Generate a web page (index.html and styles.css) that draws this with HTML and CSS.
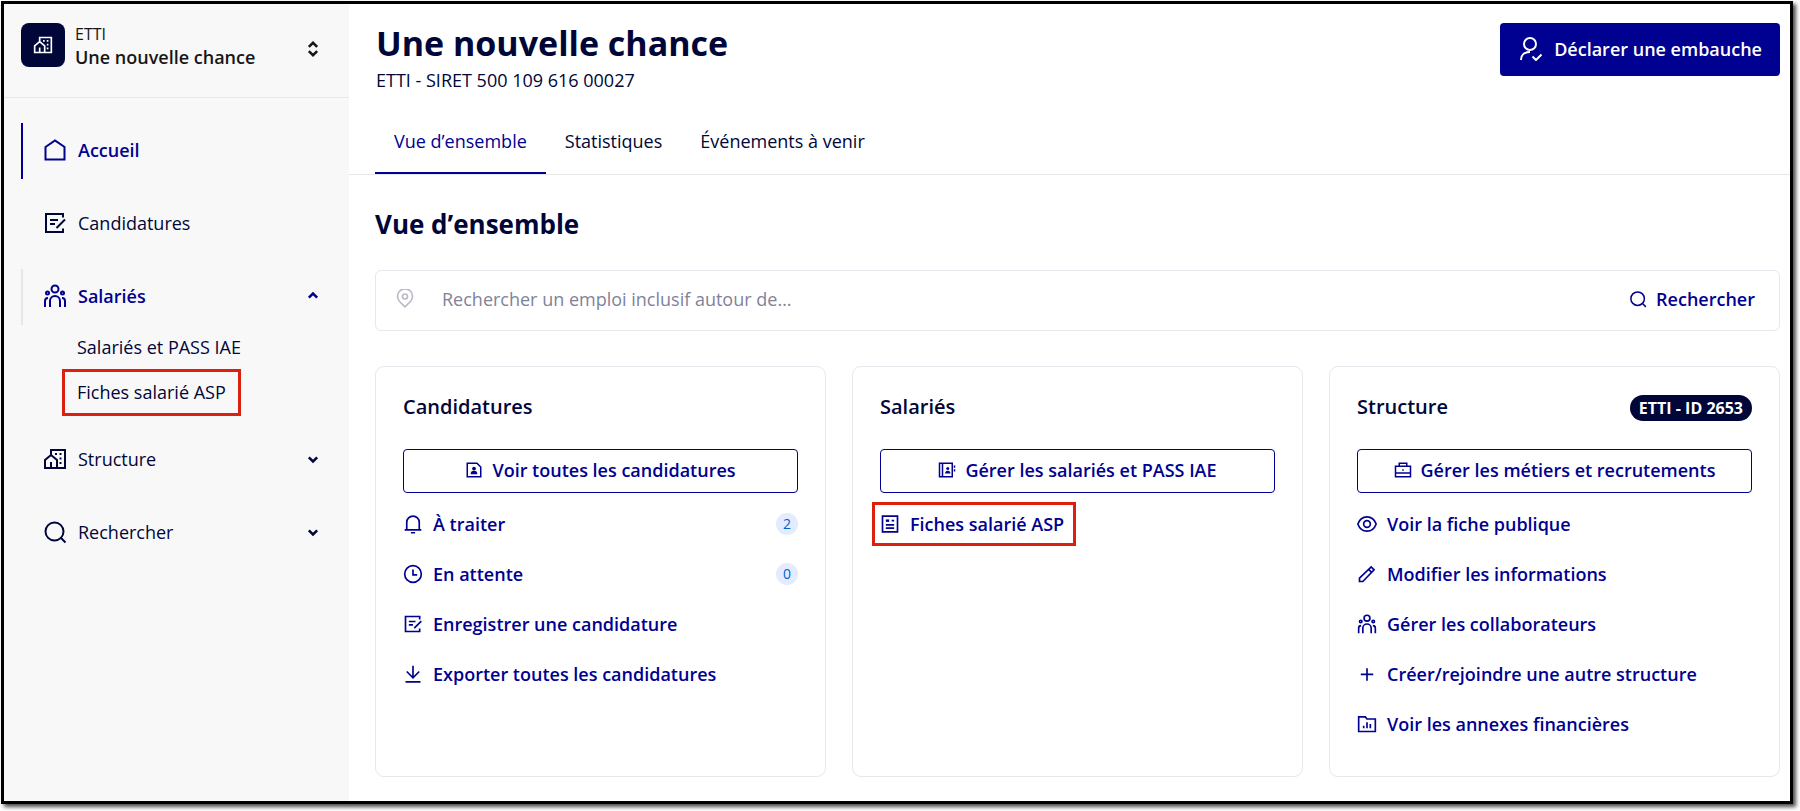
FILE: index.html
```html
<!DOCTYPE html>
<html lang="fr">
  <head>
    <meta charset="UTF-8" />
    <meta name="viewport" content="width=device-width, initial-scale=1.0" />
    <title>Une nouvelle chance - Vue d’ensemble</title>
    <link rel="stylesheet" href="styles.css">
  </head>
  <body>
    <!-- icon set -->
    <svg class="sprite" aria-hidden="true">
      <symbol id="i-home" viewBox="0 0 24 24">
        <path d="M2.500 9 12 2.500 21.500 9v12.500h-19z" />
      </symbol>
      <symbol id="i-edit" viewBox="0 0 24 24">
        <path d="M20 6.500V3H3v18h17v-3.500M7 9h8M7 13h5M22 8.500l-8.500 8.500" />
      </symbol>
      <symbol id="i-team" viewBox="0 0 24 24">
        <circle cx="12" cy="5" r="3.500" />
        <circle cx="4.500" cy="9" r="1.500" />
        <circle cx="19.500" cy="9" r="1.500" />
        <path d="M7 23v-6a5 5 0 0 1 10 0v6M2 23v-6a3 3 0 0 1 3-3M22 23v-6a3 3 0 0 0-3-3" />
      </symbol>
      <symbol id="i-building" viewBox="0 0 24 24">
        <path d="M8 8V3h14v18H2v-8l6-5 6 5v8M8 21v-6" />
        <path d="M12 7h2M16.500 7h2M16.500 11.500h2M16.500 16h2" />
      </symbol>
      <symbol id="i-search" viewBox="0 0 24 24">
        <circle cx="11.500" cy="11.500" r="9" />
        <path d="m18 18 4.500 4.500" />
      </symbol>
      <symbol id="i-down" viewBox="0 0 24 24">
        <path d="m7 10 5 5 5-5" />
      </symbol>
      <symbol id="i-up" viewBox="0 0 24 24">
        <path d="m7 14 5-5 5 5" />
      </symbol>
      <symbol id="i-updown" viewBox="0 0 24 24">
        <path d="m7 9.500 5-5 5 5M7 14.500l5 5 5-5" />
      </symbol>
      <symbol id="i-user-check" viewBox="0 0 24 24">
        <circle cx="12" cy="7" r="6" />
        <path d="M3 23c0-5 3.500-8 9-8M14.500 19.500l3.500 3.500 5.500-5.500" />
      </symbol>
      <symbol id="i-pin" viewBox="0 0 24 24">
        <path d="M12 21.500 5.500 15a9 9 0 1 1 13 0z" />
        <circle cx="12" cy="9" r="3" />
      </symbol>
      <symbol id="i-file-user" viewBox="0 0 24 24">
        <path d="M3 3h13l5 5v13H3z" />
        <circle class="fill" cx="12" cy="10" r="2.500" />
        <path class="fill" d="M7.500 17.500a4.500 4.500 0 0 1 9 0z" />
      </symbol>
      <symbol id="i-contacts" viewBox="0 0 24 24">
        <path d="M2 3h17v18H2zM6 3v18M22 6v3M22 11v3" />
        <circle class="fill" cx="13" cy="10" r="2" />
        <path class="fill" d="M9.500 16.500a3.500 3.500 0 0 1 7 0z" />
      </symbol>
      <symbol id="i-briefcase" viewBox="0 0 24 24">
        <path d="M2 7h20v14H2zM7 7V3h10v4M2 16h20M11 12h2" />
      </symbol>
      <symbol id="i-bell" viewBox="0 0 24 24">
        <path d="M4.500 19v-9a7.500 7.500 0 0 1 15 0v9M2 19h20M9.500 22.500h5" />
      </symbol>
      <symbol id="i-clock" viewBox="0 0 24 24">
        <circle cx="12" cy="12" r="10" />
        <path d="M12 6.500V13h5" />
      </symbol>
      <symbol id="i-download" viewBox="0 0 24 24">
        <path d="M12 2v14M4.500 9l7.500 7.500L19.500 9M3 21.500h18" />
      </symbol>
      <symbol id="i-article" viewBox="0 0 24 24">
        <path d="M3 2.500h18v19H3zM7 13h10M7 17h10M14 8h3" />
        <path class="fill" d="M7 6.500h4v3H7z" />
      </symbol>
      <symbol id="i-eye" viewBox="0 0 24 24">
        <path d="M1 12c2-5.500 6-8.500 11-8.500s9 3 11 8.500c-2 5.500-6 8.500-11 8.500S3 17.500 1 12z" />
        <circle cx="12" cy="12" r="4" />
      </symbol>
      <symbol id="i-pencil" viewBox="0 0 24 24">
        <path d="M3 21v-4L17 3.500l3.500 3.500L7 21zM14 6.500l3.500 3.500" />
      </symbol>
      <symbol id="i-plus" viewBox="0 0 24 24">
        <path d="M12 5v15M4.500 12.500h15" />
      </symbol>
      <symbol id="i-folder-chart" viewBox="0 0 24 24">
        <path d="M2 3.500h8l2 2.500h10v15H2zM8 14v3M12 10v7M16 12v5" />
      </symbol>
    </svg>

    <div class="frame">
      <aside class="sidebar">
        <button class="org" type="button">
          <span class="org-logo">
            <svg class="icon icon-md"><use href="#i-building" /></svg>
          </span>
          <span class="org-text">
            <span class="org-type">ETTI</span>
            <strong class="org-name">Une nouvelle chance</strong>
          </span>
          <svg class="icon icon-chevron"><use href="#i-updown" /></svg>
        </button>

        <nav class="nav">
          <a class="nav-item active" href="#">
            <svg class="icon icon-lg"><use href="#i-home" /></svg>Accueil
          </a>
          <a class="nav-item" href="#">
            <svg class="icon icon-lg"><use href="#i-edit" /></svg>Candidatures
          </a>
          <div class="nav-group">
            <button class="nav-item open" type="button" aria-expanded="true">
              <svg class="icon icon-lg"><use href="#i-team" /></svg>Salariés
              <svg class="icon icon-chevron"><use href="#i-up" /></svg>
            </button>
            <ul class="subnav">
              <li><a href="#">Salariés et PASS IAE</a></li>
              <li><a class="marked" href="#">Fiches salarié ASP</a></li>
            </ul>
          </div>
          <button class="nav-item" type="button" aria-expanded="false">
            <svg class="icon icon-lg"><use href="#i-building" /></svg>Structure
            <svg class="icon icon-chevron"><use href="#i-down" /></svg>
          </button>
          <button class="nav-item" type="button" aria-expanded="false">
            <svg class="icon icon-lg"><use href="#i-search" /></svg>Rechercher
            <svg class="icon icon-chevron"><use href="#i-down" /></svg>
          </button>
        </nav>
      </aside>

      <main class="main">
        <header class="page-header">
          <div>
            <h1>Une nouvelle chance</h1>
            <p class="siret">ETTI - SIRET 500 109 616 00027</p>
          </div>
          <button class="btn-primary" type="button">
            <svg class="icon icon-lg"><use href="#i-user-check" /></svg>Déclarer une embauche
          </button>
        </header>

        <nav class="tabs">
          <a class="tab active" href="#">Vue d’ensemble</a>
          <a class="tab" href="#">Statistiques</a>
          <a class="tab" href="#">Événements à venir</a>
        </nav>

        <section class="content">
          <h2>Vue d’ensemble</h2>

          <form class="search">
            <label for="city"><svg class="icon icon-md"><use href="#i-pin" /></svg></label>
            <input id="city" type="text" placeholder="Rechercher un emploi inclusif autour de…" aria-label="Rechercher un emploi inclusif autour de…" />
            <button type="button">
              <svg class="icon icon-sm"><use href="#i-search" /></svg>Rechercher
            </button>
          </form>

          <div class="cards">
            <article class="card">
              <div class="card-head">
                <h3>Candidatures</h3>
              </div>
              <a class="btn-outline" href="#">
                <svg class="icon icon-sm"><use href="#i-file-user" /></svg>Voir toutes les candidatures
              </a>
              <ul class="links">
                <li>
                  <a href="#"><svg class="icon icon-md"><use href="#i-bell" /></svg>À traiter</a>
                  <span class="count">2</span>
                </li>
                <li>
                  <a href="#"><svg class="icon icon-md"><use href="#i-clock" /></svg>En attente</a>
                  <span class="count">0</span>
                </li>
                <li>
                  <a href="#"><svg class="icon icon-md"><use href="#i-edit" /></svg>Enregistrer une candidature</a>
                </li>
                <li>
                  <a href="#"><svg class="icon icon-md"><use href="#i-download" /></svg>Exporter toutes les candidatures</a>
                </li>
              </ul>
            </article>

            <article class="card">
              <div class="card-head">
                <h3>Salariés</h3>
              </div>
              <a class="btn-outline" href="#">
                <svg class="icon icon-sm"><use href="#i-contacts" /></svg>Gérer les salariés et PASS IAE
              </a>
              <ul class="links">
                <li>
                  <a class="marked" href="#"><svg class="icon icon-md"><use href="#i-article" /></svg>Fiches salarié ASP</a>
                </li>
              </ul>
            </article>

            <article class="card">
              <div class="card-head">
                <h3>Structure</h3>
                <span class="badge">ETTI - ID 2653</span>
              </div>
              <a class="btn-outline" href="#">
                <svg class="icon icon-sm"><use href="#i-briefcase" /></svg>Gérer les métiers et recrutements
              </a>
              <ul class="links">
                <li>
                  <a href="#"><svg class="icon icon-md"><use href="#i-eye" /></svg>Voir la fiche publique</a>
                </li>
                <li>
                  <a href="#"><svg class="icon icon-md"><use href="#i-pencil" /></svg>Modifier les informations</a>
                </li>
                <li>
                  <a href="#"><svg class="icon icon-md"><use href="#i-team" /></svg>Gérer les collaborateurs</a>
                </li>
                <li>
                  <a href="#"><svg class="icon icon-md"><use href="#i-plus" /></svg>Créer/rejoindre une autre structure</a>
                </li>
                <li>
                  <a href="#"><svg class="icon icon-md"><use href="#i-folder-chart" /></svg>Voir les annexes financières</a>
                </li>
              </ul>
            </article>
          </div>
        </section>
      </main>
    </div>
  </body>
</html>
```
FILE: styles.css
```css
* {
  box-sizing: border-box;
}
body {
  display: flex;
  min-height: 100vh;
  margin: 0;
  padding: 1px 7px 7px 1px;
  background: #fff;
  color: #000638;
  font-family: "Open Sans", "Noto Sans", sans-serif;
  font-size: 18px;
  line-height: 26px;
}
h1,
h2,
h3,
p,
ul {
  margin: 0;
  padding: 0;
  font-weight: 600;
}
ul {
  list-style: none;
}
a {
  color: inherit;
  text-decoration: none;
}
button,
input {
  border: none;
  background: none;
  color: inherit;
  font: inherit;
}
button {
  cursor: pointer;
  text-align: left;
}
.sprite {
  position: absolute;
  width: 0;
  height: 0;
}

/* icons */
.icon {
  flex: none;
  fill: none;
  stroke: currentColor;
  stroke-width: 2;
}
.icon .fill,
symbol .fill {
  fill: currentColor;
  stroke: none;
}
.icon-sm {
  width: 18px;
  height: 18px;
}
.icon-md {
  width: 20px;
  height: 20px;
}
.icon-lg {
  width: 24px;
  height: 24px;
}
.icon-chevron {
  width: 20px;
  height: 20px;
  margin-left: auto;
  stroke-width: 3;
}

.frame {
  display: flex;
  flex: 1;
  border: 3px solid #000;
  background: #fff;
  box-shadow: 3px 3px 4px rgba(0, 0, 0, 0.7);
}

/* sidebar */
.sidebar {
  flex: none;
  width: 345px;
  background: #f8f8f8;
}
.org {
  display: flex;
  gap: 10px;
  width: 100%;
  height: 94px;
  padding: 19px 26px 0 17px;
  border-bottom: 1px solid #e7e7e7;
  color: #161616;
  align-items: flex-start;
}
.org-logo {
  display: flex;
  align-items: center;
  justify-content: center;
  width: 44px;
  height: 44px;
  border-radius: 8px;
  background: #000638;
  color: #fff;
}
.org-text {
  display: flex;
  flex-direction: column;
}
.org-type {
  font-size: 16px;
  line-height: 22px;
}
.org-name {
  font-weight: 600;
  line-height: 24px;
}
.org .icon-chevron {
  margin-top: 16px;
}
.nav {
  display: flex;
  flex-direction: column;
  gap: 17px;
  padding: 25px 16px 25px 17px;
}
.nav-item {
  display: flex;
  align-items: center;
  gap: 11px;
  width: 100%;
  height: 56px;
  padding: 0 10px 2px 20px;
  border-left: 2px solid transparent;
}
.nav-item.active,
.nav-item.open {
  color: #000091;
  font-weight: 600;
}
.nav-item.active {
  border-color: #000091;
}
.nav-item.open {
  border-color: #e5e5ec;
}
.subnav {
  padding-left: 56px;
  font-weight: 400;
}
.subnav a {
  display: inline-block;
  line-height: 45px;
  vertical-align: top;
}

/* red box around the entry to click */
.marked {
  position: relative;
}
.marked::after {
  content: "";
  position: absolute;
  inset: -9px -12px -9px -8px;
  border: 3px solid #dc2010;
}
.subnav .marked::after {
  inset: -1px -15px;
}

/* main column */
.main {
  flex: 1;
  min-width: 0;
}
.page-header {
  display: flex;
  justify-content: space-between;
  align-items: flex-start;
  padding: 19px 10px 15px 27px;
}
h1 {
  margin-bottom: 4px;
  font-size: 34px;
  font-weight: 700;
  line-height: 40px;
}
.siret {
  font-weight: 400;
}
.btn-primary {
  display: flex;
  align-items: center;
  gap: 12px;
  height: 53px;
  padding: 0 18px 2px;
  border-radius: 4px;
  background: #000091;
  color: #fff;
  font-weight: 600;
}
.tabs {
  display: flex;
  padding-left: 26px;
  border-bottom: 1px solid #e7e7e7;
}
.tab {
  padding: 20px 19px 18px;
  border-bottom: 2px solid transparent;
}
.tab.active {
  border-color: #000091;
  color: #000091;
}
.content {
  padding: 31px 10px 20px 26px;
}
h2 {
  font-size: 26px;
  font-weight: 700;
  line-height: 36px;
}
.search {
  display: flex;
  align-items: center;
  height: 61px;
  margin: 28px 0 35px;
  padding: 0 24px 3px 19px;
  border: 1px solid #e7e7ee;
  border-radius: 6px;
}
.search label {
  display: flex;
  color: #b9bac8;
}
.search input {
  flex: 1;
  padding: 0 27px;
  outline: none;
}
.search input::placeholder {
  color: #7f829b;
  opacity: 1;
}
.search button {
  display: flex;
  align-items: center;
  gap: 9px;
  padding: 0;
  color: #000091;
  font-weight: 600;
}
.cards {
  display: grid;
  grid-template-columns: repeat(3, 1fr);
  gap: 26px;
}
.card {
  padding: 26px 27px 39px;
  border: 1px solid #e7e7ee;
  border-radius: 9px;
}
.card-head {
  display: flex;
  align-items: flex-end;
  justify-content: space-between;
  height: 28px;
}
h3 {
  font-size: 20px;
  line-height: 28px;
}
.badge {
  padding: 0 9px;
  border-radius: 13px;
  background: #000638;
  color: #fff;
  font-size: 16px;
  font-weight: 700;
}
.btn-outline {
  display: flex;
  align-items: center;
  justify-content: center;
  gap: 9px;
  height: 44px;
  margin: 28px 0 18px;
  padding-bottom: 2px;
  border: 1px solid #000091;
  border-radius: 4px;
  color: #000091;
  font-weight: 600;
}
.links {
  display: flex;
  flex-direction: column;
  gap: 24px;
}
.links li {
  display: flex;
  align-items: center;
  justify-content: space-between;
}
.links a {
  display: flex;
  align-items: center;
  gap: 10px;
  color: #000091;
}
.count {
  width: 22px;
  border-radius: 11px;
  background: #e5ebff;
  color: #0063cb;
  font-size: 14px;
  font-weight: 400;
  line-height: 22px;
  text-align: center;
}
```
